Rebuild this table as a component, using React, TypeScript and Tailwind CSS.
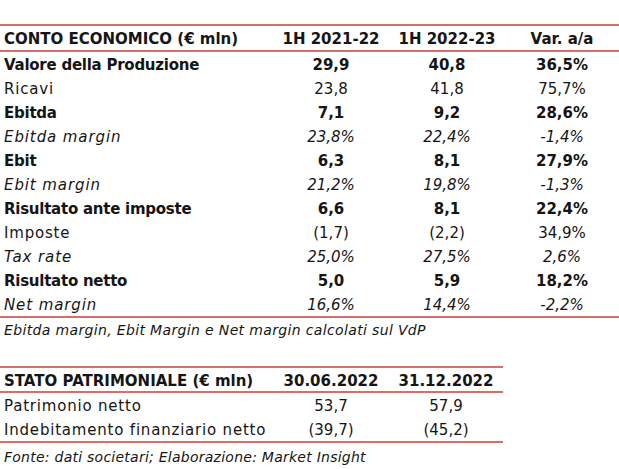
const rows: { label: string; a: string; b: string; c: string; kind: "bold" | "normal" | "italic" }[] = [
  { label: "Valore della Produzione", a: "29,9", b: "40,8", c: "36,5%", kind: "bold" },
  { label: "Ricavi", a: "23,8", b: "41,8", c: "75,7%", kind: "normal" },
  { label: "Ebitda", a: "7,1", b: "9,2", c: "28,6%", kind: "bold" },
  { label: "Ebitda margin", a: "23,8%", b: "22,4%", c: "-1,4%", kind: "italic" },
  { label: "Ebit", a: "6,3", b: "8,1", c: "27,9%", kind: "bold" },
  { label: "Ebit margin", a: "21,2%", b: "19,8%", c: "-1,3%", kind: "italic" },
  { label: "Risultato ante imposte", a: "6,6", b: "8,1", c: "22,4%", kind: "bold" },
  { label: "Imposte", a: "(1,7)", b: "(2,2)", c: "34,9%", kind: "normal" },
  { label: "Tax rate", a: "25,0%", b: "27,5%", c: "2,6%", kind: "italic" },
  { label: "Risultato netto", a: "5,0", b: "5,9", c: "18,2%", kind: "bold" },
  { label: "Net margin", a: "16,6%", b: "14,4%", c: "-2,2%", kind: "italic" },
];

const styleFor = {
  bold: "font-bold",
  normal: "font-normal",
  italic: "italic font-normal",
};

const labelFor = {
  bold: "tracking-[-0.25px]",
  normal: "tracking-[0.8px]",
  italic: "tracking-[0.9px]",
};

export default function App() {
  return (
    <div className="w-[619px] h-[469px] bg-white pt-6 text-[15px] text-[#151515] font-['DejaVu_Sans',sans-serif] leading-none">
      <div className="border-t-2 border-b-2 border-[#d4706a] grid grid-cols-[273px_116px_116px_114px] h-[28px] pt-[3px] items-center font-bold">
        <div className="pl-1">CONTO ECONOMICO (€ mln)</div>
        <div className="text-center">1H 2021-22</div>
        <div className="text-center">1H 2022-23</div>
        <div className="text-center">Var. a/a</div>
      </div>
      <div className="border-b-2 border-[#d4706a]">
        {rows.map((r) => (
          <div
            key={r.label}
            className={`grid grid-cols-[273px_116px_116px_114px] h-[24px] pt-[3px] items-center ${styleFor[r.kind]}`}
          >
            <div className={`pl-1 ${labelFor[r.kind]}`}>{r.label}</div>
            <div className="text-center">{r.a}</div>
            <div className="text-center">{r.b}</div>
            <div className="text-center">{r.c}</div>
          </div>
        ))}
      </div>
      <div className="h-[24px] flex items-center pl-1 italic text-[14px] tracking-[0.35px]">
        Ebitda margin, Ebit Margin e Net margin calcolati sul VdP
      </div>
      <div className="mt-6 w-[503px]">
        <div className="border-t-2 border-b-2 border-[#d4706a] grid grid-cols-[273px_116px_114px] h-[27px] pt-[3px] items-center font-bold">
          <div className="pl-1">STATO PATRIMONIALE (€ mln)</div>
          <div className="text-center">30.06.2022</div>
          <div className="text-center">31.12.2022</div>
        </div>
        <div className="border-b-2 border-[#d4706a]">
          <div className="grid grid-cols-[273px_116px_114px] h-[24px] pt-[3px] items-center">
            <div className="pl-1 tracking-[0.8px]">Patrimonio netto</div>
            <div className="text-center">53,7</div>
            <div className="text-center">57,9</div>
          </div>
          <div className="grid grid-cols-[273px_116px_114px] h-[24px] pt-[3px] items-center">
            <div className="pl-1 tracking-[0.8px]">Indebitamento finanziario netto</div>
            <div className="text-center">(39,7)</div>
            <div className="text-center">(45,2)</div>
          </div>
        </div>
      </div>
      <div className="h-[26px] flex items-center pl-1 pt-[2px] italic text-[14px] tracking-[0.25px]">
        Fonte: dati societari; Elaborazione: Market Insight
      </div>
    </div>
  );
}
